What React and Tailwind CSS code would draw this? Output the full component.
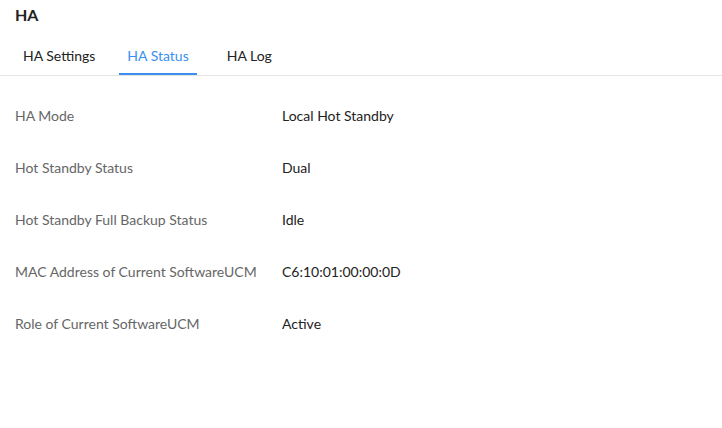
import React from "react";

const rows = [
  { label: "HA Mode", value: "Local Hot Standby" },
  { label: "Hot Standby Status", value: "Dual" },
  { label: "Hot Standby Full Backup Status", value: "Idle" },
  { label: "MAC Address of Current SoftwareUCM", value: "C6:10:01:00:00:0D" },
  { label: "Role of Current SoftwareUCM", value: "Active" },
];

const tabs = [
  { name: "HA Settings", cls: "ml-[15px]" },
  { name: "HA Status", cls: "ml-[16px]" },
  { name: "HA Log", cls: "ml-[22px]" },
];

export default function App() {
  const active = "HA Status";

  return (
    <div className="min-h-[428px] w-full bg-white font-['Lato','Noto_Sans',sans-serif]">
      <div className="flex h-[30px] items-center pl-[15px] text-[16px] font-bold text-[#222]">
        HA
      </div>

      <div className="flex border-b border-[#e5e5e5]">
        {tabs.map((t) => (
          <div
            key={t.name}
            className={
              "flex h-[45px] items-center border-b-2 px-[8px] pt-[8px] text-[14px] " +
              t.cls +
              " " +
              (t.name === active
                ? "border-[#3a8ff0] text-[#3a8ff0]"
                : "border-transparent text-[#222]")
            }
          >
            {t.name}
          </div>
        ))}
      </div>

      <div className="pt-[13px]">
        {rows.map((r) => (
          <div key={r.label} className="flex h-[52px] items-center text-[14px]">
            <div className="w-[282px] pl-[15px] text-[#666]">{r.label}</div>
            <div className="text-[#222]">{r.value}</div>
          </div>
        ))}
      </div>
    </div>
  );
}
